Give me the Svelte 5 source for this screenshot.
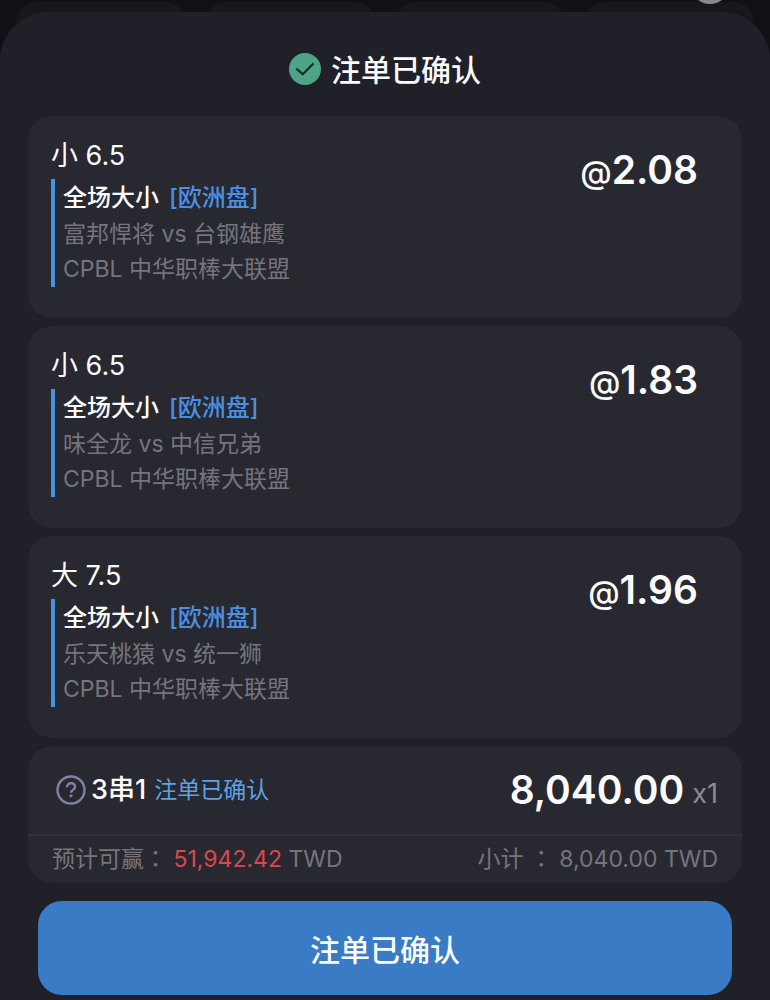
<script lang="ts">
  type Bet = {
    pick: string;
    market: string;
    oddsType: string;
    match: string;
    league: string;
    odds: string;
  };

  const bets: Bet[] = [
    {
      pick: "小 6.5",
      market: "全场大小",
      oddsType: "[欧洲盘]",
      match: "富邦悍将 vs 台钢雄鹰",
      league: "CPBL 中华职棒大联盟",
      odds: "2.08"
    },
    {
      pick: "小 6.5",
      market: "全场大小",
      oddsType: "[欧洲盘]",
      match: "味全龙 vs 中信兄弟",
      league: "CPBL 中华职棒大联盟",
      odds: "1.83"
    },
    {
      pick: "大 7.5",
      market: "全场大小",
      oddsType: "[欧洲盘]",
      match: "乐天桃猿 vs 统一狮",
      league: "CPBL 中华职棒大联盟",
      odds: "1.96"
    }
  ];

  const status = "注单已确认";
  const stake = "8,040.00";
  const payout = "51,942.42";
  const currency = "TWD";
</script>

<div class="page">
  <div class="backdrop">
    <span class="pill"></span>
    <span class="pill"></span>
    <span class="pill"></span>
    <span class="pill"></span>
    <span class="knob"></span>
  </div>

  <main class="sheet">
    <header class="sheet-header">
      <svg class="check" viewBox="0 0 32 32" aria-hidden="true">
        <circle cx="16" cy="16" r="16" fill="#4ea487" />
        <path d="M7.2 15.6l6.6 5.6L24.6 10.4" fill="none" stroke="#16302b" stroke-width="2.2" />
      </svg>
      <h1>{status}</h1>
    </header>

    <div class="list">
      {#each bets as bet}
        <article class="card bet">
          <div class="info">
            <h2>{bet.pick}</h2>
            <div class="detail">
              <p class="market">{bet.market} <span>{bet.oddsType}</span></p>
              <p>{bet.match}</p>
              <p>{bet.league}</p>
            </div>
          </div>
          <div class="odds"><span>@</span>{bet.odds}</div>
        </article>
      {/each}

      <section class="card summary">
        <div class="parlay">
          <button class="help" type="button" aria-label="3串1">
            <svg viewBox="0 0 30 30" aria-hidden="true">
              <circle cx="15" cy="15" r="13.5" fill="none" stroke="#8280aa" stroke-width="2.4" />
              <path
                d="M11 12.2c0-2.4 1.7-3.9 4-3.9s4 1.4 4 3.5c0 1.6-.8 2.4-2.1 3.2-1.4.8-1.9 1.4-1.9 2.7"
                fill="none"
                stroke="#8280aa"
                stroke-width="2.4"
              />
              <circle cx="15" cy="20.8" r="1.6" fill="#8280aa" />
            </svg>
          </button>
          <span class="parlay-name">3串1</span>
          <span class="parlay-status">{status}</span>
          <strong class="stake">{stake}</strong>
          <span class="times">x1</span>
        </div>
        <div class="totals">
          <span>预计可赢<span class="colon">：</span> <span class="payout">{payout}</span> {currency}</span>
          <span>小计 <span class="colon">：</span> {stake} {currency}</span>
        </div>
      </section>
    </div>

    <button class="confirm" type="button">{status}</button>
  </main>
</div>

<style>
  :global(body) {
    margin: 0;
    background: #101114;
  }

  .page {
    min-height: 100vh;
    display: flex;
    flex-direction: column;
    color: #fbfbfd;
    font-family: Inter, "Noto Sans CJK SC", sans-serif;
    background: #101114;
    overflow: hidden;
  }

  .backdrop {
    position: relative;
    height: 12px;
    padding: 0 16px;
    display: grid;
    grid-template-columns: repeat(4, 1fr);
    gap: 20px;
  }

  .pill {
    height: 40px;
    margin-top: 2px;
    border-radius: 20px;
    background: #17181a;
  }

  .knob {
    position: absolute;
    right: 40px;
    bottom: 8px;
    width: 40px;
    height: 40px;
    border-radius: 50%;
    background: #88888b;
  }

  .sheet {
    position: relative;
    flex: 1;
    box-sizing: border-box;
    padding: 34px 28px 6px;
    border-radius: 48px 48px 0 0;
    background: #202028;
  }

  .sheet-header {
    display: flex;
    align-items: center;
    justify-content: center;
    gap: 10px;
    height: 48px;
    margin-bottom: 22px;
  }

  .check {
    width: 32px;
    height: 32px;
    margin-bottom: 2px;
  }

  h1,
  h2,
  p {
    margin: 0;
    font-weight: 400;
  }

  h1 {
    font-size: 30px;
    font-weight: 500;
    line-height: 48px;
  }

  .list {
    display: flex;
    flex-direction: column;
    gap: 8px;
  }

  .card {
    border-radius: 24px;
    background: #282831;
  }

  .bet {
    display: flex;
    justify-content: space-between;
    padding: 22px 44px 31px 23px;
  }

  h2 {
    font-size: 27px;
    line-height: 36px;
    margin-bottom: 5px;
  }

  .detail {
    padding-left: 8px;
    border-left: 4px solid #4a90e2;
  }

  .detail p {
    font-size: 23px;
    line-height: 35px;
    color: #75757b;
  }

  .detail .market {
    display: flex;
    gap: 10px;
    font-size: 24px;
    line-height: 38px;
    font-weight: 500;
    color: #fbfbfd;
  }

  .market span {
    color: #4a90e2;
  }

  .odds {
    font-size: 39px;
    line-height: 48px;
    font-weight: 600;
    margin-top: 8px;
  }

  .odds span {
    font-size: 32px;
    font-weight: 500;
  }

  .parlay {
    display: flex;
    align-items: center;
    height: 88px;
    padding: 0 24px 0 28px;
    border-bottom: 2px solid #30303a;
    line-height: 36px;
  }

  .help {
    width: 30px;
    height: 30px;
    padding: 0;
    border: none;
    background: none;
    cursor: pointer;
  }

  .help svg {
    display: block;
  }

  .parlay-name {
    margin: 0 8px 0 5px;
    font-size: 27px;
    font-weight: 500;
  }

  .parlay-status {
    font-size: 23px;
    color: #5ba2e6;
  }

  .stake {
    margin-left: auto;
    font-size: 39px;
    font-weight: 600;
  }

  .times {
    margin: 8px 0 0 8px;
    font-size: 27px;
    color: #8b8b90;
  }

  .totals {
    display: flex;
    justify-content: space-between;
    padding: 4px 24px 7px;
    font-size: 23px;
    line-height: 34px;
    color: #75757b;
  }

  /* full-width colon centred in its box */
  .colon {
    font-family: "Noto Sans CJK TC", sans-serif;
  }

  .payout {
    color: #d9484b;
  }

  .confirm {
    display: block;
    width: calc(100% - 20px);
    height: 94px;
    margin: 18px 10px 0;
    border: none;
    border-radius: 24px;
    background: #3a7bc6;
    color: #fbfbfd;
    font-family: inherit;
    font-size: 30px;
    font-weight: 500;
    cursor: pointer;
  }
</style>
